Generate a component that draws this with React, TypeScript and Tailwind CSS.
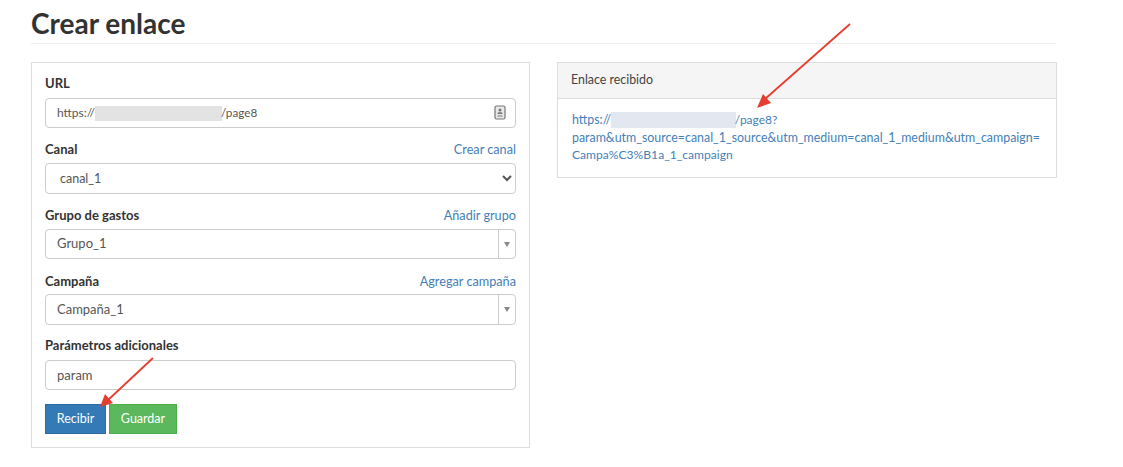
import React from 'react';

const font = { fontFamily: 'Lato, "Open Sans", sans-serif' };

const inputClass =
  'w-full rounded-[4px] border border-[#ccc] bg-white px-[11px] text-[#555] outline-none';

const Label = ({ text, link, className = '' }: { text: string; link?: string; className?: string }) => (
  <div className={`flex h-5 items-center justify-between text-[13px] leading-5 ${className}`}>
    <span className="font-bold text-[#333]">{text}</span>
    {link && <a className="text-[12.7px] text-[#4580b8]">{link}</a>}
  </div>
);

const Combo = ({ value, className = '' }: { value: string; className?: string }) => (
  <div className={`flex rounded-[4px] border border-[#ccc] bg-white text-[13px] text-[#555] ${className}`}>
    <div className="flex flex-1 items-center px-[11px]">{value}</div>
    <div className="flex w-[17px] items-center justify-center border-l border-[#ccc]">
      <span className="h-0 w-0 border-x-[3px] border-t-[5px] border-x-transparent border-t-[#888]" />
    </div>
  </div>
);

export default function App() {
  return (
    <div className="relative h-[467px] w-[1123px] overflow-hidden bg-white text-[#333]" style={font}>
      <div className="w-[1057px] pl-[31px]">
        {/* Page title */}
        <h1 className="mr-[1px] h-[44px] border-b border-[#eee] pt-[6px] text-[28px] font-bold leading-[34px] text-[#333]">
          Crear enlace
        </h1>

        <div className="mt-[18px] flex items-start gap-[27px]">
          {/* Form */}
          <div className="h-[386px] w-[499px] shrink-0 border border-[#ddd] px-[13px] pt-[10px]">
            <Label text="URL" />
            <div className="relative mt-[5px]">
              <div className={`${inputClass} flex h-[30px] items-center text-[12px]`}>
                <span>https://</span>
                <span className="h-[15px] w-[127px] bg-[#e3e3e3]" />
                <span className="ml-[-1px] text-[11.7px]">/page8</span>
              </div>
              <svg className="absolute right-[10px] top-[7px]" width="12" height="15" viewBox="0 0 12 15" fill="none">
                <rect x="1" y="1" width="10" height="13" rx="1.5" fill="#e8e8e8" stroke="#777" strokeWidth="1.2" />
                <circle cx="6" cy="5" r="1.5" fill="#777" />
                <path d="M3.5 9h5V8.3a1.5 1.5 0 0 0-1.5-1h-2a1.5 1.5 0 0 0-1.5 1z M3.5 10.5h5v1h-5z" fill="#777" />
              </svg>
            </div>

            <Label text="Canal" link="Crear canal" className="mt-[11px]" />
            <select className={`${inputClass} mt-[4px] block h-[31px] pl-[10px] text-[12.5px]`} defaultValue="canal_1">
              <option>canal_1</option>
            </select>

            <Label text="Grupo de gastos" link="Añadir grupo" className="mt-[11px]" />
            <Combo value="Grupo_1" className="mt-[4px] h-[30px]" />

            <Label text="Campaña" link="Agregar campaña" className="mt-[12px]" />
            <Combo value="Campaña_1" className="mt-[3px] h-[31px]" />

            <Label text="Parámetros adicionales" className="mt-[10px]" />
            <input className={`${inputClass} mt-[5px] block h-[30px] text-[13px]`} defaultValue="param" />

            <div className="mt-[14px] flex gap-[3px] text-[12.5px] text-white">
              <button className="h-[30px] w-[61px] border border-[#2e6da4] bg-[#337ab7]">Recibir</button>
              <button className="h-[30px] w-[68px] border border-[#4cae4c] bg-[#5cb85c]">Guardar</button>
            </div>
          </div>

          {/* Result */}
          <div className="h-[116px] w-[500px] shrink-0 border border-[#ddd]">
            <div className="flex h-[36px] items-center border-b border-[#ddd] bg-[#f5f5f5] px-[13px] text-[12.4px] text-[#444]">
              Enlace recibido
            </div>
            <div className="px-[14px] pt-[12px] text-[12.4px] leading-[17.5px] text-[#4580b8]">
              <div className="flex items-center">
                <span>https://a</span>
                <span className="ml-[-6px] h-[16px] w-[125px] bg-[#e3e8f0]" />
                <span className="ml-[-1px] text-[12px]">/page8?</span>
              </div>
              <div className="whitespace-nowrap">param&amp;utm_source=canal_1_source&amp;utm_medium=canal_1_medium&amp;utm_campaign=</div>
              <div className="text-[12.1px]">Campa%C3%B1a_1_campaign</div>
            </div>
          </div>
        </div>
      </div>

      {/* Red annotation arrows */}
      <svg className="pointer-events-none absolute left-0 top-0" width="1123" height="467" fill="none">
        <path d="M850 24 L765 99" stroke="#e53e30" strokeWidth="1.8" />
        <path d="M757 108 L763 94 L771 103 Z" fill="#e53e30" />
        <path d="M153 358 L107 401" stroke="#e53e30" strokeWidth="1.8" />
        <path d="M100 407 L105 394 L113 403 Z" fill="#e53e30" />
      </svg>
    </div>
  );
}
